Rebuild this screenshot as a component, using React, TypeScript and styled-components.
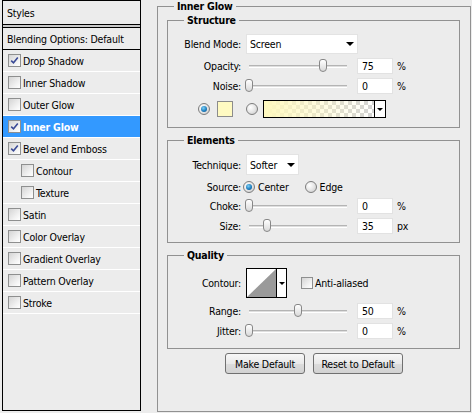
import styled, { createGlobalStyle } from 'styled-components'

const GlobalStyle = createGlobalStyle`
  html, body {
    margin: 0;
    padding: 0;
    background: #ececec;
  }
  body {
    font-family: "DejaVu Sans Condensed", "DejaVu Sans", Tahoma, sans-serif;
    font-size: 10.5px;
    letter-spacing: -0.2px;
    color: #000;
  }
  * {
    box-sizing: border-box;
  }
`

const Dialog = styled.div`
  display: flex;
  width: 472px;
  height: 413px;
  padding-left: 2px;
  background: #ececec;
`

/* ---------- left: styles list ---------- */

const StylesPanel = styled.div`
  width: 139px;
  height: 411px;
  border: 1px solid #000;
  display: flex;
  flex-direction: column;
  flex-shrink: 0;
`

const PanelHeader = styled.div`
  height: 23px;
  display: flex;
  align-items: center;
  padding-left: 4px;
`

const DoubleRule = styled.div`
  height: 4px;
  border-top: 1px solid #000;
  border-bottom: 1px solid #000;
  background: #c9c9c9;
`

const BlendingRow = styled.div`
  height: 22px;
  display: flex;
  align-items: center;
  padding-left: 4px;
  border-bottom: 1px solid #000;
`

const StyleItem = styled.div<{ $active?: boolean; $nested?: boolean }>`
  height: 22px;
  display: flex;
  align-items: center;
  gap: 2px;
  padding-left: ${p => (p.$nested ? 18 : 5)}px;
  border-bottom: 1px solid #fff;
  background: ${p => (p.$active ? '#3399ff' : 'transparent')};
  color: ${p => (p.$active ? '#fff' : '#000')};
  font-weight: ${p => (p.$active ? 'bold' : 'normal')};
`

const CheckBox = styled.span`
  width: 13px;
  height: 13px;
  flex-shrink: 0;
  border: 1px solid #8e8f8f;
  background: linear-gradient(135deg, #d4d4d4 0%, #f4f4f4 70%, #fff 100%);
  display: flex;
  align-items: center;
  justify-content: center;
`

const Tick = () => (
  <svg width="9" height="9" viewBox="0 0 9 9">
    <path d="M1.2 4.6 L3.5 6.8 L7.8 1.6" fill="none" stroke="#3a4a96" strokeWidth="1.6" />
  </svg>
)

/* ---------- right: settings ---------- */

const Group = styled.fieldset<{ $top?: number }>`
  margin: ${p => p.$top ?? 0}px 10px 0 9px;
  padding: 0;
  border: 1px solid #919191;
  min-width: 0;
`

const OuterGroup = styled(Group)`
  margin: 0 0 0 16px;
  width: 314px;
  height: 412px;
  flex-shrink: 0;
`

const Legend = styled.legend`
  margin-left: 16px;
  padding: 0 3px;
  font-weight: bold;
  line-height: 12px;
`

const GroupBody = styled.div<{ $top: number; $bottom: number }>`
  padding: ${p => p.$top}px 0 ${p => p.$bottom}px 0;
  display: flex;
  flex-direction: column;
`

const Row = styled.div<{ $h: number; $mt?: number; $indent?: number }>`
  display: flex;
  align-items: center;
  height: ${p => p.$h}px;
  margin-top: ${p => p.$mt ?? 0}px;
  padding-left: ${p => p.$indent ?? 0}px;
`

const Label = styled.span`
  width: 73px;
  margin-right: 5px;
  text-align: right;
  flex-shrink: 0;
`

const Select = styled.div<{ $w: number; $h: number }>`
  width: ${p => p.$w}px;
  height: ${p => p.$h}px;
  background: #fff;
  border: 1px solid #e3e3e3;
  display: flex;
  align-items: center;
  justify-content: space-between;
  padding: 0 3px 0 3px;
`

const Caret = styled.span`
  width: 0;
  height: 0;
  border-left: 4px solid transparent;
  border-right: 4px solid transparent;
  border-top: 4px solid #000;
`

const SmallCaret = styled(Caret)`
  border-left-width: 3px;
  border-right-width: 3px;
  border-top-width: 3px;
`

const SliderBox = styled.div`
  width: 104px;
  height: 14px;
  padding: 0 3px;
  display: flex;
  align-items: center;
  flex-shrink: 0;
`

const Track = styled.div`
  position: relative;
  flex: 1;
  height: 3px;
  border-top: 1px solid #b4b4b4;
  background: #dedede;
  border-bottom: 1px solid #fff;
`

const Thumb = styled.span`
  position: absolute;
  top: 50%;
  width: 8px;
  height: 13px;
  margin-top: -7px;
  margin-left: -4px;
  border: 1px solid #878787;
  border-radius: 3px 3px 4px 4px;
  background: linear-gradient(#ffffff, #d9d9d9);
`

const NumberField = styled.div`
  width: 36px;
  height: 16px;
  margin-left: 7px;
  padding-left: 4px;
  background: #fff;
  border: 1px solid #e2e2e2;
  display: flex;
  align-items: center;
`

const Unit = styled.span`
  margin-left: 4px;
`

const Radio = styled.span<{ $on?: boolean; $ml?: number }>`
  position: relative;
  width: 12px;
  height: 12px;
  flex-shrink: 0;
  margin-left: ${p => p.$ml ?? 0}px;
  border-radius: 50%;
  border: 1px solid #7d7d7d;
  background: radial-gradient(circle at 35% 35%, #ffffff 0%, #e6e6e6 50%, #c4c4c4 100%);
  &::after {
    content: '';
    display: ${p => (p.$on ? 'block' : 'none')};
    position: absolute;
    left: 2px;
    top: 2px;
    width: 6px;
    height: 6px;
    border-radius: 50%;
    background: radial-gradient(circle at 40% 35%, #7fd0f5 0%, #1e7fc0 55%, #0d4a80 100%);
  }
`

const RadioText = styled.span`
  margin-left: 3px;
`

const Swatch = styled.span`
  width: 16px;
  height: 16px;
  margin-left: 7px;
  border: 1px solid #8c8c8c;
  background: #fffac2;
`

const GradientPicker = styled.div`
  width: 123px;
  height: 18px;
  margin-left: 5px;
  border: 1px solid #000;
  display: flex;
`

const GradientFill = styled.div`
  flex: 1;
  background:
    linear-gradient(to right, #fff9bf 0%, rgba(255, 249, 191, 0.6) 40%, rgba(255, 249, 191, 0) 100%),
    conic-gradient(#d3d3d3 25%, #fff 0 50%, #d3d3d3 0 75%, #fff 0) 0 0 / 8px 8px;
`

const DropPart = styled.div<{ $w: number }>`
  width: ${p => p.$w}px;
  border-left: 1px solid #000;
  background: #fff;
  display: flex;
  align-items: center;
  justify-content: center;
`

const ContourPicker = styled.div`
  width: 41px;
  height: 30px;
  border: 1px solid #000;
  display: flex;
  background: #fff;
`

const ContourPreview = styled.div`
  flex: 1;
  display: flex;
`

const SmallCheck = styled(CheckBox)`
  width: 12px;
  height: 12px;
  margin-left: 14px;
`

const CheckText = styled.span`
  margin-left: 2px;
`

const ButtonRow = styled.div`
  display: flex;
  justify-content: center;
  gap: 8px;
  margin-top: 4px;
`

const Button = styled.button<{ $w: number }>`
  width: ${p => p.$w}px;
  height: 21px;
  padding: 0;
  font: inherit;
  letter-spacing: inherit;
  color: #000;
  border: 1px solid #707070;
  border-radius: 3px;
  background: linear-gradient(#f7f7f7, #e9e9e9 50%, #dcdcdc 51%, #d2d2d2);
`

/* ---------- pieces ---------- */

const Slider = ({ value }: { value: number }) => (
  <SliderBox>
    <Track>
      <Thumb style={{ left: `${value}%` }} />
    </Track>
  </SliderBox>
)

const SliderRow = ({
  label,
  value,
  pos,
  unit,
  mt,
}: {
  label: string
  value: string
  pos: number
  unit: string
  mt?: number
}) => (
  <Row $h={20} $mt={mt}>
    <Label>{label}</Label>
    <Slider value={pos} />
    <NumberField>{value}</NumberField>
    <Unit>{unit}</Unit>
  </Row>
)

const styleItems = [
  { name: 'Drop Shadow', checked: true },
  { name: 'Inner Shadow' },
  { name: 'Outer Glow' },
  { name: 'Inner Glow', checked: true, active: true },
  { name: 'Bevel and Emboss', checked: true },
  { name: 'Contour', nested: true },
  { name: 'Texture', nested: true },
  { name: 'Satin' },
  { name: 'Color Overlay' },
  { name: 'Gradient Overlay' },
  { name: 'Pattern Overlay' },
  { name: 'Stroke' },
]

export default function App() {
  return (
    <>
      <GlobalStyle />
      <Dialog>
        <StylesPanel>
          <PanelHeader>Styles</PanelHeader>
          <DoubleRule />
          <BlendingRow>Blending Options: Default</BlendingRow>
          {styleItems.map(item => (
            <StyleItem key={item.name} $active={item.active} $nested={item.nested}>
              <CheckBox>{item.checked && <Tick />}</CheckBox>
              {item.name}
            </StyleItem>
          ))}
        </StylesPanel>

        <OuterGroup>
          <Legend>Inner Glow</Legend>

          <Group $top={2}>
            <Legend>Structure</Legend>
            <GroupBody $top={8} $bottom={8}>
              <Row $h={20}>
                <Label>Blend Mode:</Label>
                <Select $w={112} $h={20}>
                  Screen
                  <Caret />
                </Select>
              </Row>
              <SliderRow label="Opacity:" value="75" pos={75} unit="%" mt={2} />
              <SliderRow label="Noise:" value="0" pos={0} unit="%" />
              <Row $h={20} $mt={3} $indent={30}>
                <Radio $on />
                <Swatch />
                <Radio $ml={13} />
                <GradientPicker>
                  <GradientFill />
                  <DropPart $w={11}>
                    <SmallCaret />
                  </DropPart>
                </GradientPicker>
              </Row>
            </GroupBody>
          </Group>

          <Group $top={6}>
            <Legend>Elements</Legend>
            <GroupBody $top={8} $bottom={6}>
              <Row $h={21}>
                <Label>Technique:</Label>
                <Select $w={53} $h={21}>
                  Softer
                  <Caret />
                </Select>
              </Row>
              <Row $h={18} $mt={3}>
                <Label>Source:</Label>
                <Radio $on $ml={-3} />
                <RadioText>Center</RadioText>
                <Radio $ml={16} />
                <RadioText>Edge</RadioText>
              </Row>
              <SliderRow label="Choke:" value="0" pos={0} unit="%" />
              <SliderRow label="Size:" value="35" pos={18} unit="px" />
            </GroupBody>
          </Group>

          <Group $top={6}>
            <Legend>Quality</Legend>
            <GroupBody $top={7} $bottom={7}>
              <Row $h={30}>
                <Label>Contour:</Label>
                <ContourPicker>
                  <ContourPreview>
                    <svg width="29" height="28" viewBox="0 0 29 28">
                      <polygon points="0,28 29,0 29,28" fill="#9a9a9a" />
                    </svg>
                  </ContourPreview>
                  <DropPart $w={10}>
                    <SmallCaret />
                  </DropPart>
                </ContourPicker>
                <SmallCheck />
                <CheckText>Anti-aliased</CheckText>
              </Row>
              <SliderRow label="Range:" value="50" pos={50} unit="%" mt={3} />
              <SliderRow label="Jitter:" value="0" pos={0} unit="%" />
            </GroupBody>
          </Group>

          <ButtonRow>
            <Button $w={80}>Make Default</Button>
            <Button $w={90}>Reset to Default</Button>
          </ButtonRow>
        </OuterGroup>
      </Dialog>
    </>
  )
}
